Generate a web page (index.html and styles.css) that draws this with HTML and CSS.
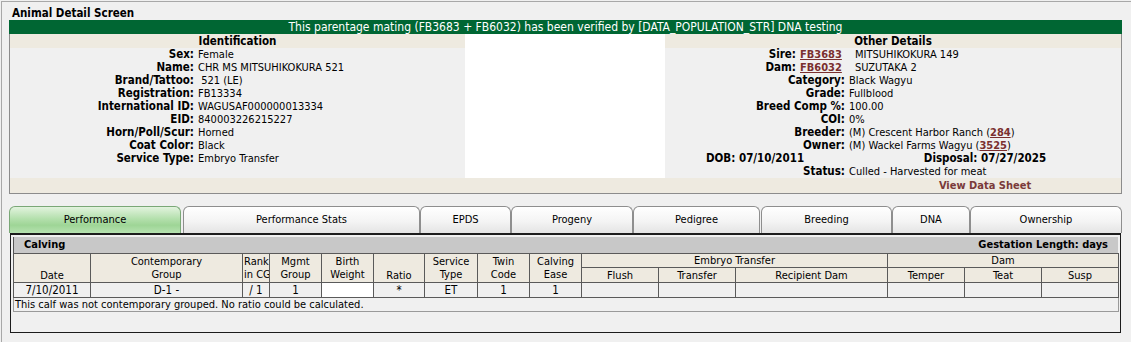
FILE: index.html
```html
<!DOCTYPE html>
<html>
<head>
<meta charset="utf-8">
<title>Animal Detail Screen</title>
<link rel="stylesheet" href="styles.css">
</head>
<body>
<div class="screen">
  <div class="title">Animal Detail Screen</div>
  <div class="banner">This parentage mating (FB3683 + FB6032) has been verified by [DATA_POPULATION_STR] DNA testing</div>
  <div class="detail">
    <div class="sec-head id-head">Identification</div>
    <div class="photo"></div>
    <div class="sec-head other-head">Other Details</div>
    <div class="id-body">
      <div class="lbl">Sex:</div><div class="val">Female</div>
      <div class="lbl">Name:</div><div class="val">CHR MS MITSUHIKOKURA 521</div>
      <div class="lbl">Brand/Tattoo:</div><div class="val">&nbsp;521 (LE)</div>
      <div class="lbl">Registration:</div><div class="val">FB13334</div>
      <div class="lbl">International ID:</div><div class="val">WAGUSAF000000013334</div>
      <div class="lbl">EID:</div><div class="val">840003226215227</div>
      <div class="lbl">Horn/Poll/Scur:</div><div class="val">Horned</div>
      <div class="lbl">Coat Color:</div><div class="val">Black</div>
      <div class="lbl">Service Type:</div><div class="val">Embryo Transfer</div>
    </div>
    <div class="other-body">
      <div class="parent-row">
        <div class="plbl">Sire:</div><a class="link pid" href="#">FB3683</a><div class="pname">MITSUHIKOKURA 149</div>
      </div>
      <div class="parent-row">
        <div class="plbl">Dam:</div><a class="link pid" href="#">FB6032</a><div class="pname">SUZUTAKA 2</div>
      </div>
      <div class="lbl">Category:</div><div class="val">Black Wagyu</div>
      <div class="lbl">Grade:</div><div class="val">Fullblood</div>
      <div class="lbl">Breed Comp %:</div><div class="val">100.00</div>
      <div class="lbl">COI:</div><div class="val">0%</div>
      <div class="lbl">Breeder:</div><div class="val">(M) Crescent Harbor Ranch (<a class="link" href="#">284</a>)</div>
      <div class="lbl">Owner:</div><div class="val">(M) Wackel Farms Wagyu (<a class="link" href="#">3525</a>)</div>
      <div class="date-l">DOB: 07/10/2011</div><div class="date-r">Disposal: 07/27/2025</div>
      <div class="lbl">Status:</div><div class="val">Culled - Harvested for meat</div>
    </div>
    <div class="detail-foot"><span class="datasheet">View Data Sheet</span></div>
  </div>

  <div class="tabs">
    <div class="tab active w-perf">Performance</div>
    <div class="tab w-stats">Performance Stats</div>
    <div class="tab w-epds">EPDS</div>
    <div class="tab w-prog">Progeny</div>
    <div class="tab w-ped">Pedigree</div>
    <div class="tab w-breed">Breeding</div>
    <div class="tab w-dna">DNA</div>
    <div class="tab w-own">Ownership</div>
  </div>
  <div class="tab-body">
    <div class="calving-bar"><span>Calving</span><span>Gestation Length: days</span></div>
    <table class="perf">
      <colgroup>
        <col class="c77"><col class="c152"><col class="c27"><col class="c52"><col class="c52"><col class="c51"><col class="c53"><col class="c52"><col class="c52"><col class="c77"><col class="c77"><col class="c152"><col class="c77"><col class="c77"><col class="c77">
      </colgroup>
      <tr class="hrow1">
        <th rowspan="2" class="bottom">Date</th>
        <th rowspan="2">Contemporary<br>Group</th>
        <th rowspan="2" class="left">Rank<br>in CG</th>
        <th rowspan="2">Mgmt<br>Group</th>
        <th rowspan="2">Birth<br>Weight</th>
        <th rowspan="2" class="bottom">Ratio</th>
        <th rowspan="2">Service<br>Type</th>
        <th rowspan="2">Twin<br>Code</th>
        <th rowspan="2">Calving<br>Ease</th>
        <th colspan="3">Embryo Transfer</th>
        <th colspan="3">Dam</th>
      </tr>
      <tr class="hrow2">
        <th>Flush</th><th>Transfer</th><th>Recipient Dam</th>
        <th>Temper</th><th>Teat</th><th>Susp</th>
      </tr>
      <tr class="drow">
        <td>7/10/2011</td><td>D-1 -</td><td>/ 1</td><td>1</td><td class="white"></td><td>*</td><td>ET</td><td>1</td><td>1</td><td></td><td></td><td></td><td></td><td></td><td></td>
      </tr>
      <tr class="note">
        <td colspan="15">This calf was not contemporary grouped. No ratio could be calculated.</td>
      </tr>
    </table>
  </div>
</div>
</body>
</html>
```

FILE: styles.css
```css
* { box-sizing: border-box; }
html, body { margin: 0; padding: 0; }
body {
  background: #f0f0f0;
  font-family: "DejaVu Sans Condensed", "DejaVu Sans", sans-serif;
  font-stretch: condensed;
  font-size: 11px;
  color: #000;
  width: 1131px;
  height: 342px;
  overflow: hidden;
}
.screen {
  margin: 1px 0 0 1px;
  border-top: 1px solid #a8a8a8;
  border-left: 1px solid #a8a8a8;
  padding: 4px 0 0 7px;
  height: 341px;
}
.title {
  font-size: 11.5px;
  font-weight: bold;
  line-height: 14px;
  padding-left: 3px;
}
.banner {
  width: 1113px;
  height: 14px;
  background: #006633;
  color: #fff;
  font-size: 12px;
  line-height: 14px;
  text-align: center;
}
.detail {
  width: 1113px;
  display: grid;
  grid-template-columns: 455px 200px 1fr;
  grid-template-rows: 14px 130px 15px;
  border: 1px solid #8c8c8c;
  border-top: none;
  background: #f0f0f0;
}
.sec-head {
  background: #eeeae0;
  font-size: 11.5px;
  font-weight: bold;
  line-height: 14px;
  text-align: center;
}
.id-head { grid-column: 1; grid-row: 1; }
.other-head { grid-column: 3; grid-row: 1; }
.photo { grid-column: 2; grid-row: 1 / 3; background: #fff; }
.id-body {
  grid-column: 1; grid-row: 2;
  display: grid;
  grid-template-columns: 184px 1fr;
  grid-auto-rows: 13px;
  column-gap: 4px;
  line-height: 13px;
}
.other-body {
  grid-column: 3; grid-row: 2;
  display: grid;
  grid-template-columns: 180px 1fr;
  grid-auto-rows: 13px;
  column-gap: 4px;
  line-height: 13px;
}
.lbl { text-align: right; font-weight: bold; white-space: nowrap; font-size: 11.5px; }
.val { white-space: nowrap; }
.parent-row {
  grid-column: 1 / 3;
  display: grid;
  grid-template-columns: 131px 51px 1fr;
  column-gap: 4px;
  white-space: nowrap;
}
.plbl { text-align: right; font-weight: bold; font-size: 11.5px; }
.link { color: #7a2f2f; font-weight: bold; text-decoration: underline; }
.date-l, .date-r { font-weight: bold; text-align: center; white-space: nowrap; font-size: 11.5px; }
.detail-foot {
  grid-column: 1 / 4; grid-row: 3;
  background: #eeeae0;
  padding-left: 839px;
  text-align: center;
  line-height: 15px;
}
.datasheet { color: #7a3a3a; font-weight: bold; font-size: 11px; }

.tabs {
  margin-top: 12px;
  width: 1113px;
  height: 27px;
  display: flex;
}
.tab {
  flex: 0 0 auto;
  height: 27px;
  border: 1px solid #8e8e8e;
  border-bottom: none;
  border-radius: 6px 6px 0 0;
  background: linear-gradient(to bottom, #ffffff 0%, #f4f4f4 55%, #e4e4e4 100%);
  text-align: center;
  font-size: 11px;
  line-height: 26px;
}
.tab.active {
  border-color: #7aa877;
  background: linear-gradient(to bottom, #e2f3de 0%, #b4e0ad 45%, #9ed596 70%, #b6e2b0 100%);
}
.w-perf { width: 172px; margin-right: 2px; }
.w-stats { width: 237px; }
.w-epds { width: 91px; }
.w-prog { width: 122px; }
.w-ped { width: 127px; margin-right: 1px; }
.w-breed { width: 131px; }
.w-dna { width: 78px; }
.w-own { width: 152px; }

.tab-body {
  width: 1111px;
  margin-left: 1px;
  height: 100px;
  border: 1px solid #1c1c1c;
  border-top: 2px solid #1c1c1c;
  padding: 2px 2px 0 2px;
}
.calving-bar {
  height: 16px;
  background: #c8c8c8;
  display: flex;
  justify-content: space-between;
  font-size: 11px;
  font-weight: bold;
  line-height: 16px;
  padding: 0 10px 0 10px;
  border-left: 1px solid #555;
}
.perf {
  width: 1105px;
  table-layout: fixed;
  border-collapse: collapse;
  font-size: 11px;
}
.c77 { width: 77px; } .c152 { width: 152px; } .c27 { width: 27px; }
.c52 { width: 52px; } .c51 { width: 51px; } .c53 { width: 53px; }
.perf th, .perf td {
  border: 1px solid #5a5a5a;
  padding: 0 1px;
  font-weight: normal;
  text-align: center;
  overflow: hidden;
  white-space: nowrap;
}
.perf th {
  background: #eeeae0;
  line-height: 13px;
}
.perf th.bottom { vertical-align: bottom; }
.perf th.left { text-align: left; }
.hrow1 th[colspan] { height: 14px; }
.hrow2 th { height: 15px; }
.drow td { background: #f0f0f0; height: 15px; line-height: 13px; font-size: 11.5px; }
.drow td.white { background: #fff; }
.note td {
  text-align: left;
  height: 14px;
  line-height: 13px;
  border-color: #9a9a9a;
  border-top-color: #5a5a5a;
  font-size: 11px;
}
```
